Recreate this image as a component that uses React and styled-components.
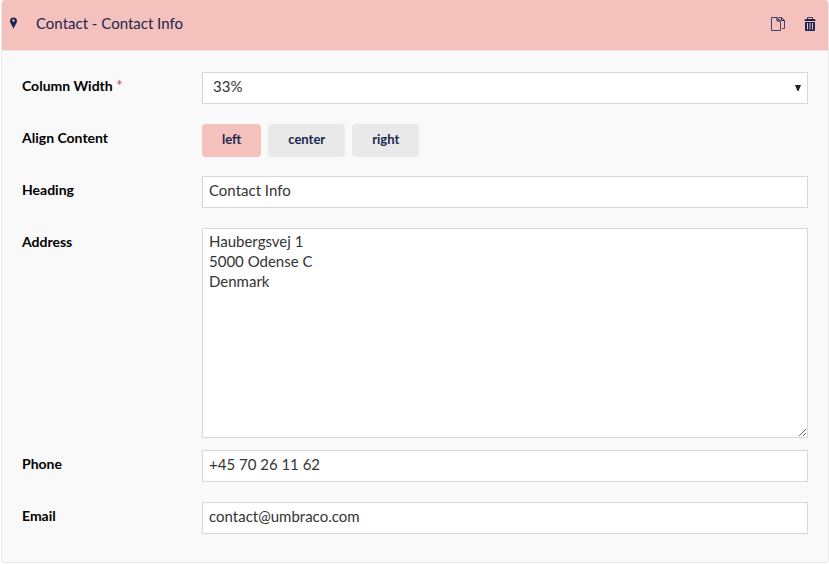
import React, { useState } from "react";
import styled, { createGlobalStyle } from "styled-components";

const GlobalStyle = createGlobalStyle`
  *, *::before, *::after { box-sizing: border-box; }
  body {
    margin: 0;
    background: #fff;
    font-family: Lato, "Open Sans", sans-serif;
    font-size: 15px;
    line-height: 20px;
    color: #343434;
  }
`;

const Panel = styled.section`
  margin: 0 0 0 1px;
  background: #f9f9f9;
  border: 1px solid #e8e8e8;
  border-top: 0;
  border-radius: 4px;
  overflow: hidden;
`;

const Header = styled.header`
  display: flex;
  align-items: center;
  height: 51px;
  margin: 0 -1px;
  padding: 0 13px 4px 8px;
  background: #f5c1bc;
  border-bottom: 1px solid #e8e8e8;
  color: #1b264f;
`;

const Title = styled.h1`
  flex: 1;
  margin: 0 0 0 18px;
  font-size: 15px;
  font-weight: 400;
`;

const Actions = styled.div`
  display: flex;
  gap: 18px;
`;

const IconButton = styled.button`
  display: flex;
  padding: 0;
  border: 0;
  background: none;
  color: inherit;
  cursor: pointer;
`;

const Form = styled.form`
  display: flex;
  flex-direction: column;
  gap: 20px;
  padding: 21px 20px 28px;
`;

const Row = styled.div`
  display: grid;
  grid-template-columns: 180px minmax(0, 1fr);
  align-items: start;
  margin-bottom: ${(p) => (p.$tight ? "-8px" : "0")};
`;

const Label = styled.label`
  padding-top: 4px;
  font-size: 14px;
  font-weight: 700;
  color: #000;
`;

const Required = styled.span`
  font-size: 15px;
  line-height: 1;
  font-weight: 400;
  color: #c8385a;
`;

const controlStyles = `
  display: block;
  width: 100%;
  margin: 0;
  border: 1px solid #d8d7d9;
  border-radius: 0;
  background: #fff;
  color: #343434;
  font: inherit;
`;

const Input = styled.input`
  ${controlStyles}
  height: 32px;
  padding: 3px 6px 7px;
`;

const TextArea = styled.textarea`
  ${controlStyles}
  height: 210px;
  padding: 2px 6px;
  resize: vertical;
`;

const SelectBox = styled.div`
  display: grid;
  align-items: center;

  & > * { grid-area: 1 / 1; }
`;

const Select = styled.select`
  ${controlStyles}
  height: 32px;
  padding: 3px 24px 7px 10px;
  appearance: none;
`;

const Arrow = styled.svg`
  justify-self: end;
  margin-right: 7px;
  pointer-events: none;
`;

const Options = styled.div`
  display: flex;
  gap: 7px;
  height: 32px;
`;

const Option = styled.button`
  height: 33px;
  padding: 0 20px 4px;
  border: 0;
  border-radius: 4px;
  background: ${(p) => (p.$active ? "#f5c1bc" : "#e9e9e9")};
  color: #1b264f;
  font: 700 13px/20px Lato, sans-serif;
  cursor: pointer;
`;

const PinIcon = () => (
  <svg width="9" height="12" viewBox="0 0 9 12" aria-hidden="true">
    <path
      fill="currentColor"
      fillRule="evenodd"
      d="M4.500 0.500C2.300 0.500 1 2 1 4c0 2.400 2.200 4 3.500 8C5.800 8 8 6.400 8 4c0-2-1.300-3.500-3.500-3.500ZM4.500 2.300a1.200 1.200 0 1 1 0 2.400a1.200 1.200 0 0 1 0-2.400Z"
    />
  </svg>
);

const CopyIcon = () => (
  <svg width="16" height="16" viewBox="0 0 16 16" fill="none" stroke="currentColor" aria-hidden="true">
    <path strokeOpacity="0.8" d="M1.500 2.500H7L10.500 6V15.500H1.500Z" />
    <path d="M7 2.500V6H10.500M7.500 3.500L9.500 5.500" />
    <path strokeOpacity="0.8" d="M8.500 2.500H11.500L14.500 5.500V13.500H12" />
    <path d="M11.500 2.500V5.500H14.500" />
  </svg>
);

const TrashIcon = () => (
  <svg width="12" height="16" viewBox="0 0 12 16" aria-hidden="true">
    <path fill="none" stroke="currentColor" strokeOpacity="0.8" d="M3.500 4V2.500H8.500V4" />
    <path fill="currentColor" d="M1.500 4H10.500L11.500 5V6H0.500V5Z" />
    <path
      fill="currentColor"
      fillRule="evenodd"
      d="M1 7H11V15Q11 16 10 16H2Q1 16 1 15ZM3 8V14.500H4V8ZM5 8V14.500H5.500V8ZM6.500 8V14.500H7V8ZM8 8V14.500H9V8Z"
    />
  </svg>
);

const alignments = ["left", "center", "right"];

export default function App() {
  const [align, setAlign] = useState("left");

  return (
    <>
      <GlobalStyle />
      <Panel>
        <Header>
          <PinIcon />
          <Title>Contact - Contact Info</Title>
          <Actions>
            <IconButton type="button" aria-label="Copy"><CopyIcon /></IconButton>
            <IconButton type="button" aria-label="Delete"><TrashIcon /></IconButton>
          </Actions>
        </Header>
        <Form>
          <Row>
            <Label htmlFor="width">Column Width <Required>*</Required></Label>
            <SelectBox>
              <Select id="width" defaultValue="33%" required>
                <option>33%</option>
                <option>50%</option>
                <option>100%</option>
              </Select>
              <Arrow width="6" height="7" viewBox="0 0 6 7" aria-hidden="true">
                <path fill="#222" d="M0 0H6L3.500 6H2.500Z" />
              </Arrow>
            </SelectBox>
          </Row>
          <Row>
            <Label as="span" id="align-label">Align Content</Label>
            <Options role="group" aria-labelledby="align-label">
              {alignments.map((name) => (
                <Option
                  key={name}
                  type="button"
                  $active={align === name}
                  aria-pressed={align === name}
                  onClick={() => setAlign(name)}
                >
                  {name}
                </Option>
              ))}
            </Options>
          </Row>
          <Row>
            <Label htmlFor="heading">Heading</Label>
            <Input id="heading" defaultValue="Contact Info" />
          </Row>
          <Row $tight>
            <Label htmlFor="address">Address</Label>
            <TextArea id="address" defaultValue={"Haubergsvej 1\n5000 Odense C\nDenmark"} />
          </Row>
          <Row>
            <Label htmlFor="phone">Phone</Label>
            <Input id="phone" type="tel" defaultValue="+45 70 26 11 62" />
          </Row>
          <Row>
            <Label htmlFor="email">Email</Label>
            <Input id="email" type="email" defaultValue="contact@umbraco.com" />
          </Row>
        </Form>
      </Panel>
    </>
  );
}
